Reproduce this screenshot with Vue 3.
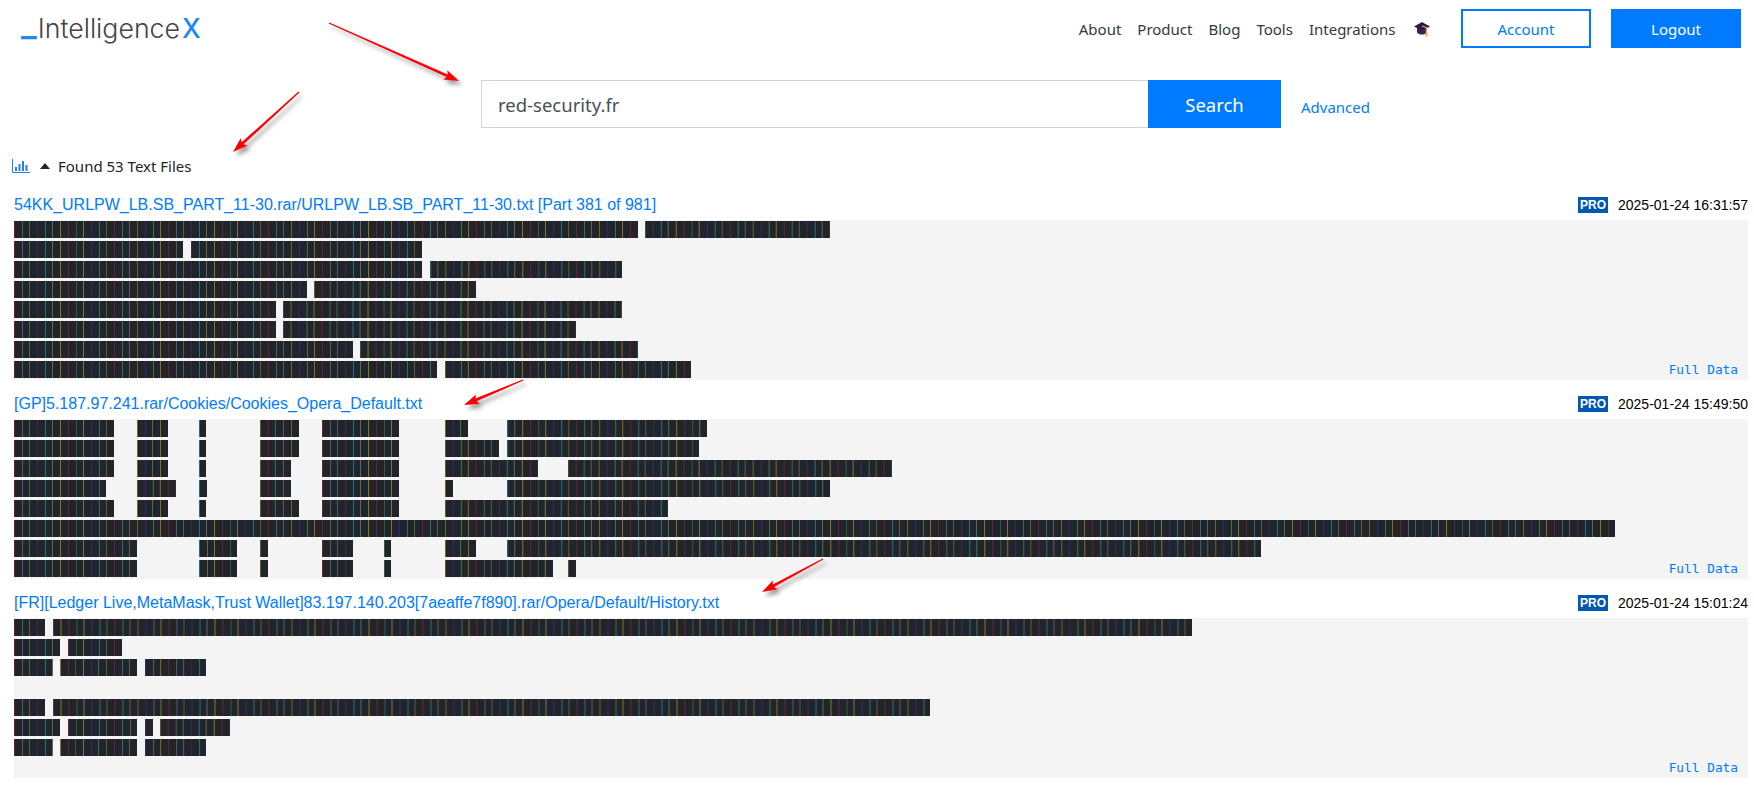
<script setup>
const PITCH = 7.7
const stripeColors = ['#6a2229','#41606a','#4c6055','#3a2a5c','#1c7290','#4f7058','#8a7428','#642445','#2a5c4c','#7a7450','#2e2a78','#2a6e7c','#5c5c30','#6a2430','#2f6a78','#566058','#6c6430','#30287a','#3f7058','#8a6a20']
const stops = stripeColors.map((c, k) => {
  const a = (k * PITCH).toFixed(1)
  const b = (k * PITCH + 1).toFixed(1)
  return `${c} ${a}px, ${c} ${b}px, transparent ${b}px, transparent ${((k + 1) * PITCH).toFixed(1)}px`
}).join(', ')
const stripeBg = `linear-gradient(90deg, ${stops})`

function row(...pairs) {
  let pos = 0
  return pairs.map(([start, len]) => {
    const s = { gap: ' '.repeat(start - pos), text: '█'.repeat(len) }
    pos = start + len
    return s
  })
}

const c1 = [[0, 13], [16, 4], [24, 1], [32, 5], [40, 10]]
const items = [
  {
    title: '54KK_URLPW_LB.SB_PART_11-30.rar/URLPW_LB.SB_PART_11-30.txt [Part 381 of 981]',
    date: '2025-01-24 16:31:57',
    rows: [
      row([0, 81], [82, 24]),
      row([0, 22], [23, 30]),
      row([0, 53], [54, 25]),
      row([0, 38], [39, 21]),
      row([0, 34], [35, 44]),
      row([0, 34], [35, 38]),
      row([0, 44], [45, 36]),
      row([0, 55], [56, 32])
    ]
  },
  {
    title: '[GP]5.187.97.241.rar/Cookies/Cookies_Opera_Default.txt',
    date: '2025-01-24 15:49:50',
    rows: [
      row(...c1, [56, 3], [64, 26]),
      row(...c1, [56, 7], [64, 25]),
      row([0, 13], [16, 4], [24, 1], [32, 4], [40, 10], [56, 12], [72, 42]),
      row([0, 12], [16, 5], [24, 1], [32, 4], [40, 10], [56, 1], [64, 42]),
      row(...c1, [56, 29]),
      row([0, 208]),
      row([0, 16], [24, 5], [32, 1], [40, 4], [48, 1], [56, 4], [64, 98]),
      row([0, 16], [24, 5], [32, 1], [40, 4], [48, 1], [56, 14], [72, 1])
    ]
  },
  {
    title: '[FR][Ledger Live,MetaMask,Trust Wallet]83.197.140.203[7aeaffe7f890].rar/Opera/Default/History.txt',
    date: '2025-01-24 15:01:24',
    rows: [
      row([0, 4], [5, 148]),
      row([0, 6], [7, 7]),
      row([0, 5], [6, 10], [17, 8]),
      [],
      row([0, 4], [5, 114]),
      row([0, 6], [7, 9], [17, 1], [19, 9]),
      row([0, 5], [6, 10], [17, 8])
    ]
  }
]

const nav = ['About', 'Product', 'Blog', 'Tools', 'Integrations']

function arrow(x1, y1, x2, y2) {
  const dx = x2 - x1, dy = y2 - y1
  const l = Math.hypot(dx, dy)
  const ux = dx / l, uy = dy / l, nx = -uy, ny = ux
  const p = (along, side) => `${(x1 + ux * along + nx * side).toFixed(1)},${(y1 + uy * along + ny * side).toFixed(1)}`
  return [p(0, 0.7), p(l - 13, 1.4), p(l - 15, 5), p(l, 0), p(l - 15, -5), p(l - 13, -1.4), p(0, -0.7)].join(' ')
}
const arrows = [
  arrow(329, 23, 459, 81),
  arrow(299, 92, 233, 152),
  arrow(523, 380, 464, 405),
  arrow(823, 559, 762, 592)
]
</script>

<template>
  <div class="page">
    <header class="header">
      <div class="logo"><span class="logo-us">_</span><span class="logo-name">Intelligence</span><span class="logo-x">X</span></div>
      <nav class="nav">
        <a v-for="n in nav" :key="n" class="nav-link">{{ n }}</a>
        <svg class="hat" width="18" height="16" viewBox="0 0 18 16">
          <path d="M4 7v4c0 1.5 2.5 2.6 5 2.6s5-1.1 5-2.6V7z" fill="#3b2350" />
          <path d="M9 1 17 5.5 9 9.5 1 5.5z" fill="#2f1a4a" />
          <path d="M9 5 13.4 6.6V12" fill="none" stroke="#e8a33a" stroke-width="1.2" />
          <rect x="12.6" y="11" width="1.8" height="4.5" fill="#f0a830" />
        </svg>
        <a class="btn btn-outline">Account</a>
        <a class="btn btn-solid">Logout</a>
      </nav>
    </header>

    <section class="search">
      <div class="search-input">red-security.fr</div>
      <button class="search-btn">Search</button>
      <a class="advanced">Advanced</a>
    </section>

    <div class="found">
      <svg class="chart" width="18" height="14" viewBox="0 0 18 14">
        <path d="M.5 0v13.5H18" fill="none" stroke="#2b7de0" />
        <path d="M3 8h2v4H3zM6.5 5h2v7h-2zM10 2h2v10h-2zM13.5 6h2v6h-2z" fill="#2b7de0" />
      </svg>
      <svg class="caret" width="10" height="6" viewBox="0 0 10 6"><path d="M5 0 10 6H0z" fill="#212529" /></svg>
      <span>Found 53 Text Files</span>
    </div>

    <main class="results">
      <article v-for="(item, i) in items" :key="i" class="item">
        <div class="item-head">
          <a class="item-title">{{ item.title }}</a>
          <span class="badge">PRO</span>
          <span class="date">{{ item.date }}</span>
        </div>
        <div class="pane">
          <div v-for="(r, k) in item.rows" :key="k" class="line"><template v-for="(s, j) in r" :key="j">{{ s.gap }}<span class="redact">{{ s.text }}</span></template></div>
          <a class="full">Full Data</a>
        </div>
      </article>
    </main>

    <svg class="arrows" width="1754" height="792" viewBox="0 0 1754 792">
      <polygon v-for="(a, i) in arrows" :key="i" :points="a" class="arrow" />
    </svg>
  </div>
</template>

<style scoped>
.page {
  position: relative;
  width: 1754px;
  height: 792px;
  overflow: hidden;
  background: #fff;
  color: #212529;
  font-family: "Noto Sans", "Open Sans", sans-serif;
}
.header {
  display: flex;
  align-items: center;
  justify-content: space-between;
  height: 39px;
  padding: 9px 13px 0 21px;
}
.logo {
  display: flex;
  align-items: baseline;
  font-family: Inter, sans-serif;
  font-size: 26.7px;
  font-weight: 300;
  color: #444;
  margin-top: -7px;
}
.logo-us {
  color: #1e88f0;
  font-weight: 500;
  font-size: 34px;
  margin-right: 1px;
  transform: translateY(-2px);
}
.logo-x { color: #1e88f0; font-weight: 500; margin-left: 2px; }
.nav { display: flex; align-items: center; }
.nav-link {
  font-size: 15px;
  color: #343a40;
  margin-right: 16px;
}
.hat { margin: 0 30px 0 1.5px; }
.btn {
  display: flex;
  align-items: center;
  justify-content: center;
  box-sizing: border-box;
  width: 130px;
  height: 39px;
  font-size: 15px;
}
.btn-outline { border: 2px solid #007bff; color: #007bff; margin-right: 20px; }
.btn-solid { background: #007bff; color: #fff; }
.search {
  display: flex;
  align-items: stretch;
  height: 48px;
  margin-top: 32px;
  padding-left: 481px;
}
.search-input {
  box-sizing: border-box;
  width: 667px;
  border: 1px solid #ced4da;
  border-right: none;
  padding-left: 16px;
  display: flex;
  align-items: center;
  font-size: 18.5px;
  color: #495057;
}
.search-btn {
  width: 133px;
  border: none;
  background: #007bff;
  color: #fff;
  font-family: inherit;
  font-size: 18.5px;
}
.advanced {
  margin-left: 20px;
  align-self: center;
  margin-top: 5px;
  font-size: 15px;
  color: #007bff;
}
.found {
  display: flex;
  align-items: center;
  height: 24px;
  margin-top: 26px;
  padding-left: 12px;
  font-size: 15px;
}
.caret { margin: 0 8px 0 10px; }
.results { margin-top: 3px; padding: 0 6px 0 14px; }
.item-head {
  display: flex;
  align-items: center;
  height: 39px;
  padding-top: 9px;
  box-sizing: border-box;
  font-family: "Liberation Sans", Arial, sans-serif;
  font-size: 14px;
}
.item-title { flex: 1; color: #007bff; font-size: 16px; }
.badge {
  background: #0058b0;
  color: #fff;
  font-size: 12px;
  font-weight: 700;
  line-height: 16px;
  width: 30px;
  text-align: center;
  margin-right: 10px;
}
.date { color: #000; }
.pane {
  position: relative;
  height: 160px;
  padding-top: 1px;
  box-sizing: border-box;
  background: #f4f4f4;
}
.line {
  height: 20px;
  white-space: pre;
  font-family: "Liberation Mono", monospace;
  font-size: 12.833px;
  line-height: 17px;
}
.redact {
  position: relative;
  display: inline-block;
  height: 17px;
  vertical-align: top;
  overflow: hidden;
  background: #212529;
  color: #212529;
}
.redact::after {
  content: "";
  position: absolute;
  inset: 0;
  background-image: v-bind(stripeBg);
  background-size: 154px 100%;
  background-repeat: repeat-x;
  background-position: 14px 0;
  background-attachment: fixed;
}
.full {
  position: absolute;
  right: 10px;
  bottom: 1px;
  font-family: "DejaVu Sans Mono", monospace;
  font-size: 12.8px;
  line-height: 18px;
  color: #007bff;
}
.arrows { position: absolute; left: 0; top: 0; pointer-events: none; }
.arrow { fill: #f00; filter: drop-shadow(3px 4px 2px rgba(0, 0, 0, 0.4)); }
</style>
